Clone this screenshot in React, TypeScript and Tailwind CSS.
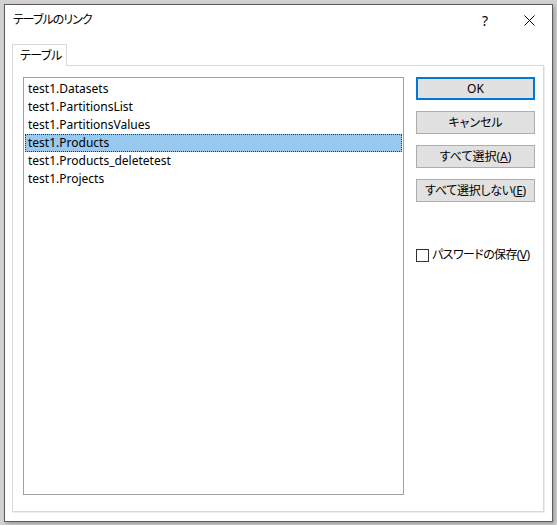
const font = { fontFamily: '"Noto Sans", "Noto Sans CJK JP", sans-serif' };

const items = [
  'test1.Datasets',
  'test1.PartitionsList',
  'test1.PartitionsValues',
  'test1.Products',
  'test1.Products_deletetest',
  'test1.Projects',
];

function Btn({ children, primary }: { children: React.ReactNode; primary?: boolean }) {
  return (
    <button
      className={
        primary
          ? 'h-[23px] w-[119px] border-2 border-[#0078d7] bg-[#e1e1e1] text-[12px] text-black leading-none whitespace-nowrap'
          : 'h-[23px] w-[119px] border border-[#adadad] bg-[#e1e1e1] text-[12px] text-black leading-none whitespace-nowrap'
      }
    >
      {children}
    </button>
  );
}

export default function App() {
  return (
    <div
      className="w-[557px] h-[525px] bg-[#d2d2d2] pt-[4px] pl-[4px] overflow-hidden [font-feature-settings:'palt']"
      style={font}
    >
      <div className="w-[549px] h-[518px] border border-[#5c5c5c] bg-white flex flex-col shadow-[2px_2px_4px_rgba(0,0,0,0.25)]">
        {/* title bar */}
        <div className="h-[30px] flex items-center pl-[8px] text-[12px] text-black">
          <span className="flex-1 tracking-[-1px]">テーブルのリンク</span>
          <span className="w-[20px] text-center mr-[29px] text-[14px]">?</span>
          <svg width="11" height="11" viewBox="0 0 11 11" className="mr-[17px]">
            <path d="M0.5 0.5 L10.5 10.5 M10.5 0.5 L0.5 10.5" stroke="#000" strokeWidth="1" />
          </svg>
        </div>

        {/* tab */}
        <div className="mt-[9px] ml-[7px] flex">
          <div className="relative z-10 -mb-px h-[22px] w-[55px] border border-b-0 border-[#d9d9d9] bg-white pl-[7px] text-[12px] leading-[21px] text-black whitespace-nowrap tracking-[-0.5px]">
            テーブル
          </div>
        </div>

        {/* panel */}
        <div className="ml-[7px] w-[532px] h-[447px] border border-[#d9d9d9] shadow-[1px_1px_0_#ececec] flex pt-[11px] pl-[10px]">
          <div className="w-[381px] shrink-0 h-[418px] border border-[#a0a0a0] bg-white pt-[2px] px-px">
            {items.map((t, i) => (
              <div
                key={t}
                className={
                  i === 3
                    ? 'h-[18px] pl-[3px] text-[12px] leading-[18px] text-black bg-[#99c9ef] outline-1 outline-dotted outline-[#333] -outline-offset-1'
                    : 'h-[18px] pl-[3px] text-[12px] leading-[18px] text-black'
                }
              >
                {t}
              </div>
            ))}
          </div>

          <div className="ml-[12px] shrink-0 flex flex-col">
            <div className="flex flex-col gap-[11px]">
              <Btn primary>OK</Btn>
              <Btn>キャンセル</Btn>
              <Btn>
                すべて選択(<span className="underline">A</span>)
              </Btn>
              <Btn>
                <span className="tracking-[-0.3px]">
                  すべて選択しない(<span className="underline">E</span>)
                </span>
              </Btn>
            </div>

            <label className="mt-[44px] flex items-center gap-[3px] text-[12px] text-black whitespace-nowrap">
              <span className="w-[13px] h-[13px] shrink-0 border border-[#333] bg-white inline-block" />
              <span className="tracking-[-0.6px]">
                パスワードの保存(<span className="underline">V</span>)
              </span>
            </label>
          </div>
        </div>
      </div>
    </div>
  );
}
